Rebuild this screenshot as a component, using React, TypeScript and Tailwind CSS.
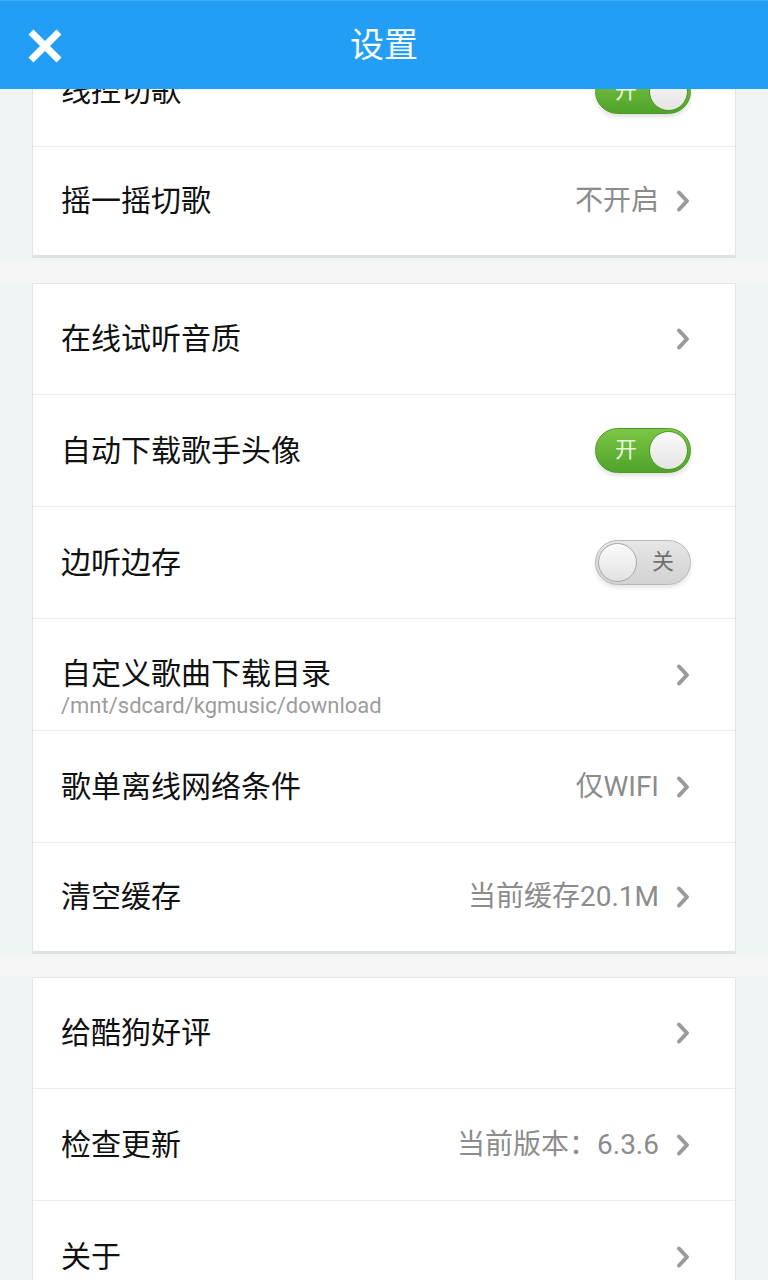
import React from "react";

const font = { fontFamily: '"Roboto", "Noto Sans CJK SC", sans-serif' };

function Chevron() {
  return (
    <svg width="16" height="24" viewBox="0 0 16 24" className="shrink-0">
      <path d="M4 3.5 L12 12 L4 20.5" fill="none" stroke="#9a9a9a" strokeWidth="4" strokeLinecap="round" strokeLinejoin="round" />
    </svg>
  );
}

function Toggle({ on }: { on: boolean }) {
  if (on) {
    return (
      <div className="relative w-[96px] h-[45px] rounded-full border border-[#4d9a27] bg-gradient-to-b from-[#7cc744] to-[#4fa32a] shadow-[0_3px_4px_rgba(0,0,0,0.12)]">
        <span className="absolute left-[19px] top-[6px] text-[22px] leading-[30px] text-[#eaf6e0]">开</span>
        <div className="absolute right-[2px] top-[2px] w-[39px] h-[39px] rounded-full bg-gradient-to-b from-[#fbfbfb] to-[#e4e4e4] border border-[#4d9a27]" />
      </div>
    );
  }
  return (
    <div className="relative w-[96px] h-[45px] rounded-full border border-[#b8b8b8] bg-gradient-to-b from-[#e6e6e6] to-[#d2d2d2] shadow-[0_3px_4px_rgba(0,0,0,0.1)]">
      <span className="absolute right-[16px] top-[6px] text-[22px] leading-[30px] text-[#707070]">关</span>
      <div className="absolute left-[2px] top-[2px] w-[39px] h-[39px] rounded-full bg-gradient-to-b from-[#fbfbfb] to-[#e2e2e2] border border-[#a8a8a8]" />
    </div>
  );
}

type RowProps = {
  title: string;
  sub?: string;
  value?: string;
  toggle?: boolean;
  pos?: "first" | "mid" | "last";
};

function Row({ title, sub, value, toggle, pos = "mid" }: RowProps) {
  const cls =
    pos === "first"
      ? "h-[110px]"
      : pos === "last"
      ? "h-[109px] border-t border-[#ececec]"
      : "h-[112px] border-t border-[#ececec]";
  return (
    <div className={`flex items-center pl-[28px] pr-[44px] ${cls}`}>
      <div className={`flex-1 flex flex-col ${sub ? "pt-[25px]" : ""}`}>
        <span className="text-[30px] leading-[38px] text-[#111111]">{title}</span>
        {sub && <span className="text-[22px] leading-[26px] text-[#9c9c9c]">{sub}</span>}
      </div>
      {toggle === undefined ? (
        <div className="flex items-center gap-[16px]">
          {value && <span className="text-[28px] text-[#8c8c8c]">{value}</span>}
          <Chevron />
        </div>
      ) : (
        <Toggle on={toggle} />
      )}
    </div>
  );
}

function Card({ children }: { children: React.ReactNode }) {
  return (
    <div className="bg-[#eff4f4] px-[32px]">
      <div className="bg-white border border-[#e2e6e6] border-b-[3px] border-b-[#dce1e1]">{children}</div>
    </div>
  );
}

export default function App() {
  return (
    <div className="w-[768px] h-[1280px] overflow-hidden bg-[#eff4f4]" style={font}>
      <div className="relative z-10 h-[89px] bg-[#229ef4] border-t border-[#45adf5] flex items-center justify-center">
        <svg width="36" height="36" viewBox="0 0 36 36" className="absolute left-[27px] top-[27px]">
          <path d="M4 4 L32 32 M32 4 L4 32" stroke="white" strokeWidth="7" strokeLinecap="butt" />
        </svg>
        <span className="text-[34px] text-white">设置</span>
      </div>
      <div className="-mt-[54px]">
        <Card>
          <Row pos="first" title="线控切歌" toggle={true} />
          <Row pos="last" title="摇一摇切歌" value="不开启" />
        </Card>
        <div className="h-[25px] bg-[#f5f5f5]" />
        <Card>
          <Row pos="first" title="在线试听音质" />
          <Row title="自动下载歌手头像" toggle={true} />
          <Row title="边听边存" toggle={false} />
          <Row title="自定义歌曲下载目录" sub="/mnt/sdcard/kgmusic/download" />
          <Row title="歌单离线网络条件" value="仅WIFI" />
          <Row pos="last" title="清空缓存" value="当前缓存20.1M" />
        </Card>
        <div className="h-[23px] bg-[#f5f5f5]" />
        <Card>
          <Row pos="first" title="给酷狗好评" />
          <Row title="检查更新" value="当前版本：6.3.6" />
          <Row title="关于" />
        </Card>
      </div>
    </div>
  );
}
